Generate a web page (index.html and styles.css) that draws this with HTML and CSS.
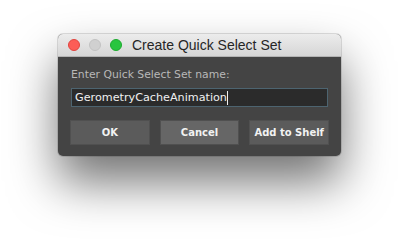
FILE: index.html
```html
<!DOCTYPE html>
<html>
<head>
    <title>Create Quick Select Set</title>
    <link rel="stylesheet" href="styles.css">
</head>
<body>
    <div class="window">
        <div class="titlebar">
            <div class="lights">
                <span class="light close"></span>
                <span class="light min"></span>
                <span class="light zoom"></span>
            </div>
            <div class="title">Create Quick Select Set</div>
        </div>
        <div class="content">
            <div class="label">Enter Quick Select Set name:</div>
            <div class="field">GerometryCacheAnimation<span class="caret"></span></div>
            <div class="buttons">
                <div class="btn">OK</div>
                <div class="btn hover">Cancel</div>
                <div class="btn">Add to Shelf</div>
            </div>
        </div>
    </div>
</body>
</html>
```

FILE: styles.css
```css
body {
    margin: 0;
    width: 400px;
    height: 240px;
    background-color: #ffffff;
    font-family: "Liberation Sans", Arial, sans-serif;
    overflow: hidden;
}
.window {
    width: 283px;
    margin: 34px 0 0 58px;
    border-radius: 5px;
    overflow: hidden;
    background-color: #444444;
    box-shadow: 0 26px 48px rgba(0, 0, 0, 0.55), 0 0 0 1px rgba(0, 0, 0, 0.12);
}
.titlebar {
    height: 23px;
    display: flex;
    align-items: center;
    background: linear-gradient(#ececec, #d6d6d6);
    border-bottom: 1px solid #b4b4b4;
    box-sizing: border-box;
}
.lights {
    display: flex;
    gap: 9px;
    padding-left: 10px;
}
.light {
    width: 12px;
    height: 12px;
    border-radius: 50%;
    box-sizing: border-box;
}
.close {
    background-color: #fc5d57;
    border: 1px solid #e0443e;
}
.min {
    background-color: #d0d0d0;
    border: 1px solid #c2c2c2;
}
.zoom {
    background-color: #29c53f;
    border: 1px solid #1caa2e;
}
.title {
    margin-left: 10px;
    font-size: 14px;
    color: #262626;
}
.content {
    padding: 9px 12px 11px 12px;
}
.label {
    font-family: "DejaVu Sans", sans-serif;
    font-size: 10.8px;
    color: #b8b8b8;
    margin-left: 1px;
    height: 17px;
    line-height: 17px;
}
.field {
    margin: 5px 0 0 1px;
    width: 257px;
    height: 19px;
    box-sizing: border-box;
    background-color: #2b2b2b;
    border: 1px solid #4d6470;
    font-family: "DejaVu Sans", sans-serif;
    font-size: 11.2px;
    line-height: 17px;
    color: #f0f0f0;
    padding-left: 3px;
    display: flex;
    align-items: center;
}
.caret {
    width: 1px;
    height: 14px;
    background-color: #f0f0f0;
}
.buttons {
    display: flex;
    gap: 10px;
    margin-top: 13px;
}
.btn {
    width: 80px;
    height: 25px;
    box-sizing: border-box;
    background-color: #5b5b5b;
    border: 1px solid #505050;
    color: #f2f2f2;
    font-family: "DejaVu Sans", sans-serif;
    font-weight: bold;
    font-size: 10px;
    display: flex;
    align-items: center;
    justify-content: center;
}
.btn.hover {
    background-color: #666666;
}
```
